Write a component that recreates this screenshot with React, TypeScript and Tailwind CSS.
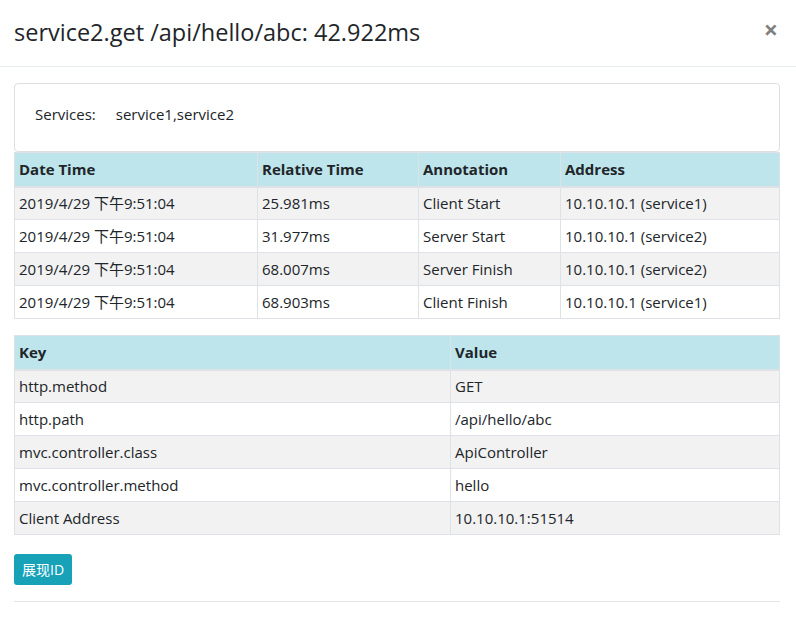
const spans = [
  { date: '2019/4/29 下午9:51:04', rel: '25.981ms', ann: 'Client Start', addr: '10.10.10.1 (service1)' },
  { date: '2019/4/29 下午9:51:04', rel: '31.977ms', ann: 'Server Start', addr: '10.10.10.1 (service2)' },
  { date: '2019/4/29 下午9:51:04', rel: '68.007ms', ann: 'Server Finish', addr: '10.10.10.1 (service2)' },
  { date: '2019/4/29 下午9:51:04', rel: '68.903ms', ann: 'Client Finish', addr: '10.10.10.1 (service1)' },
];

const tags = [
  ['http.method', 'GET'],
  ['http.path', '/api/hello/abc'],
  ['mvc.controller.class', 'ApiController'],
  ['mvc.controller.method', 'hello'],
  ['Client Address', '10.10.10.1:51514'],
];

const th = 'border border-[#dee2e6] border-b-2 px-[4px] text-left font-bold align-middle h-[34px]';
const td = 'border border-[#dee2e6] px-[4px] h-[33px] align-middle';

export default function App() {
  return (
    <div
      className="w-[796px] h-[626px] bg-white text-[#212529] overflow-hidden"
      style={{ fontFamily: '"Open Sans", "Noto Sans CJK SC", sans-serif' }}
    >
      <div className="h-[67px] flex items-center justify-between pl-[14px] pr-[14px] border-b border-[#e9ecef]">
        <h4 className="text-[23.5px] font-medium leading-none">service2.get /api/hello/abc: 42.922ms</h4>
        <button className="text-[25px] font-bold leading-none text-black/50 mr-[4px] -mt-[8px]">×</button>
      </div>

      <div className="pl-[14px] pr-[16px] pt-[16px] text-[15px]">
        <div className="h-[69px] border border-[#dfdfdf] rounded-[4px] flex items-start pt-[19px] px-[20px] gap-[20px]">
          <span>Services:</span>
          <span>service1,service2</span>
        </div>

        <table className="w-full table-fixed border-collapse">
          <colgroup>
            <col className="w-[243px]" />
            <col className="w-[161px]" />
            <col className="w-[142px]" />
            <col />
          </colgroup>
          <thead>
            <tr className="bg-[#bee5eb]">
              <th className={th}>Date Time</th>
              <th className={th}>Relative Time</th>
              <th className={th}>Annotation</th>
              <th className={th}>Address</th>
            </tr>
          </thead>
          <tbody>
            {spans.map((s, i) => (
              <tr key={i} className={i % 2 === 0 ? 'bg-[#f2f2f2]' : 'bg-white'}>
                <td className={td}>{s.date}</td>
                <td className={td}>{s.rel}</td>
                <td className={td}>{s.ann}</td>
                <td className={td}>{s.addr}</td>
              </tr>
            ))}
          </tbody>
        </table>

        <table className="w-full table-fixed border-collapse mt-[16px]">
          <colgroup>
            <col className="w-[436px]" />
            <col />
          </colgroup>
          <thead>
            <tr className="bg-[#bee5eb]">
              <th className={th}>Key</th>
              <th className={th}>Value</th>
            </tr>
          </thead>
          <tbody>
            {tags.map(([k, v], i) => (
              <tr key={k} className={i % 2 === 0 ? 'bg-[#f2f2f2]' : 'bg-white'}>
                <td className={td}>{k}</td>
                <td className={td}>{v}</td>
              </tr>
            ))}
          </tbody>
        </table>

        <button className="mt-[19px] h-[31px] px-[8px] rounded-[3px] bg-[#17a2b8] text-white text-[14px]">
          展现ID
        </button>

        <div className="mt-[16px] border-t border-[#e5e5e5]" />
      </div>
    </div>
  );
}
